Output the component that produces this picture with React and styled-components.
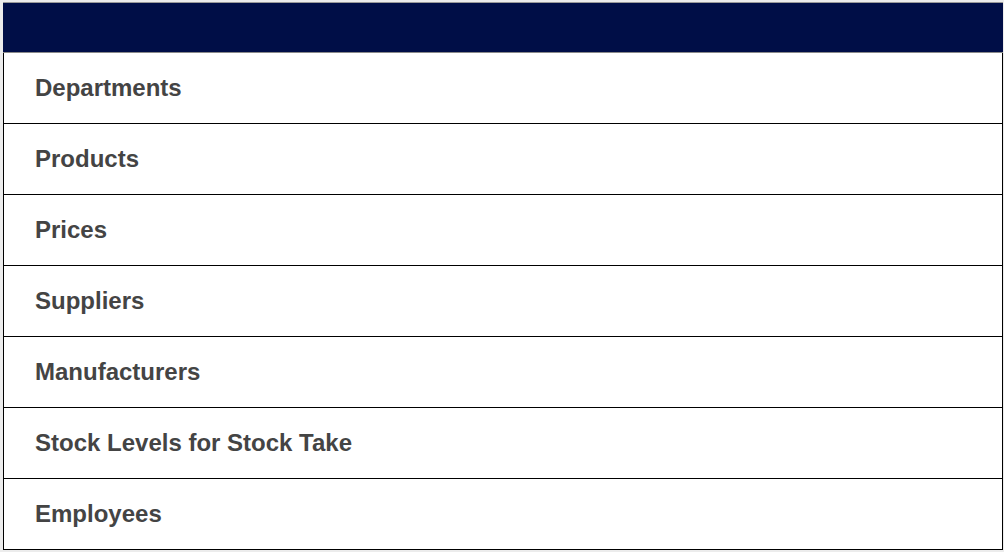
import styled, { createGlobalStyle } from "styled-components";

const items = [
  "Departments",
  "Products",
  "Prices",
  "Suppliers",
  "Manufacturers",
  "Stock Levels for Stock Take",
  "Employees",
];

const GlobalStyle = createGlobalStyle`
  body {
    margin: 0;
    background: #ececec;
    font-family: "Liberation Sans", Arial, sans-serif;
  }
`;

const Page = styled.div`
  padding: 2px 2px 0 3px;
`;

const Panel = styled.div`
  display: flex;
  flex-direction: column;
  width: 1000px;
  background: #fff;
`;

const Header = styled.div`
  height: 49px;
  background: #000e47;
  border-top: 1px solid #9a9a9a;
  border-bottom: 1px solid #8a8a8a;
`;

const Row = styled.div`
  display: flex;
  align-items: center;
  height: 70px;
  padding-left: 31px;
  border: 1px solid #000;
  border-top: none;
  color: #444;
  font-size: 24px;
  font-weight: 700;
  cursor: pointer;
`;

const App = () => {
  return (
    <>
      <GlobalStyle />
      <Page>
        <Panel>
          <Header />
          {items.map((label) => (
            <Row key={label}>{label}</Row>
          ))}
        </Panel>
      </Page>
    </>
  );
};

export default App;
